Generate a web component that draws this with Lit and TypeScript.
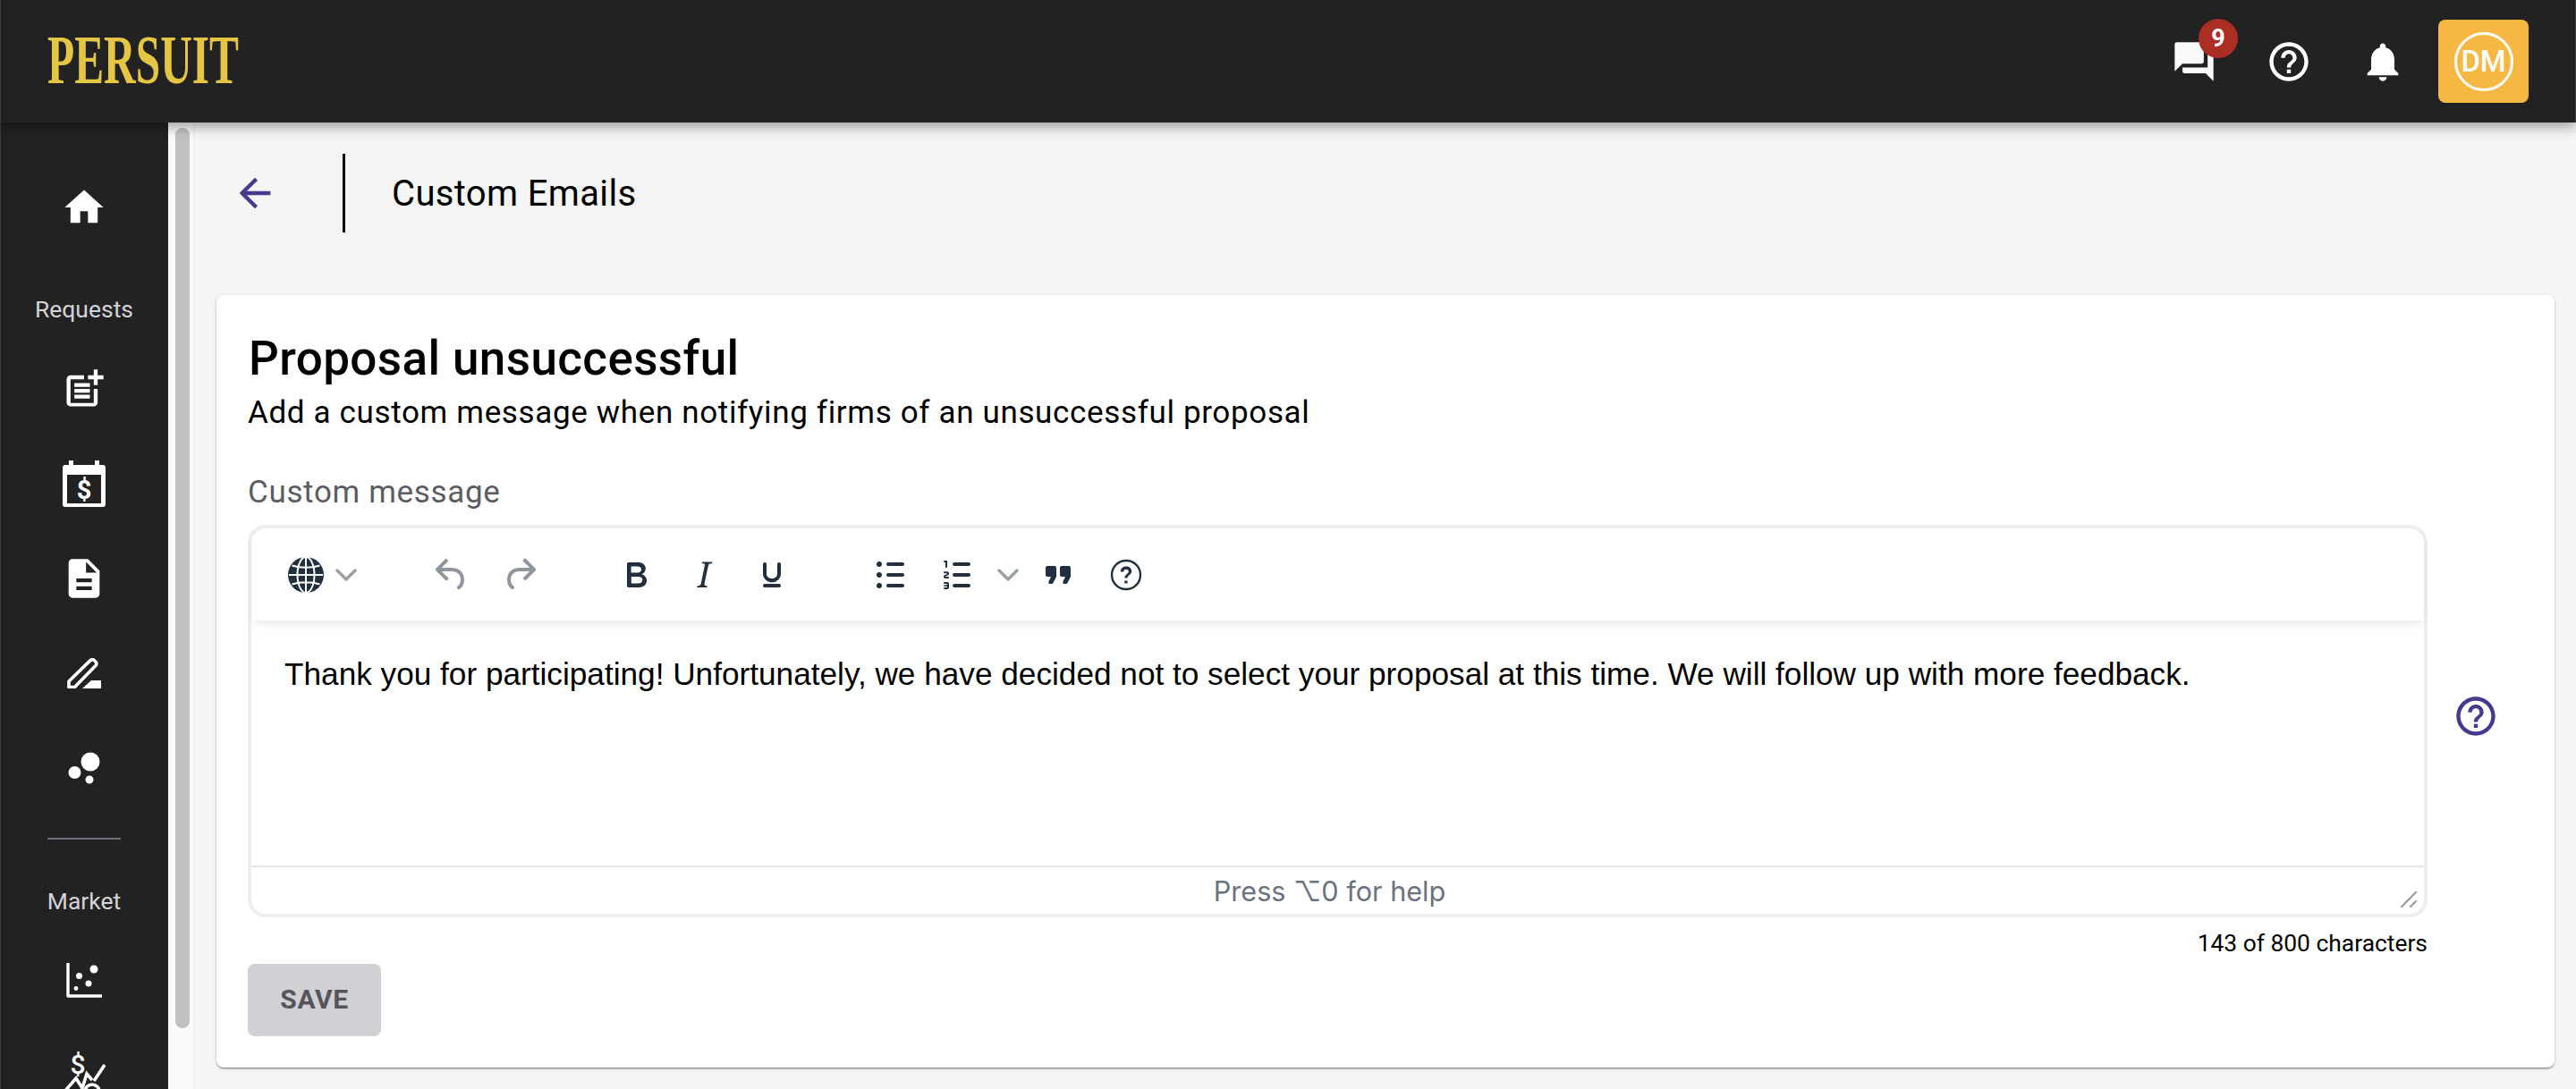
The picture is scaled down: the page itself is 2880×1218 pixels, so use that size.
import { LitElement, html, css } from "lit";
import { customElement } from "lit/decorators.js";

const P = {
  home: "M10 20v-6h4v6h5v-8h3L12 3 2 12h3v8z",
  postAdd: "M17 19.22H5V7h7V5H5C3.9 5 3 5.9 3 7v12c0 1.1.9 2 2 2h12c1.1 0 2-.9 2-2v-7h-2v7.22zM19 2h-2v3h-3s.01 2 0 2h3v2.99c.01.01 2 0 2 0V7h3V5h-3V2zM7 9h8v2H7V9zM7 12v2h8v-2H7zM7 15h8v2H7z",
  desc: "M14 2H6c-1.1 0-1.99.9-1.99 2L4 20c0 1.1.89 2 1.99 2H18c1.1 0 2-.9 2-2V8l-6-6zm2 16H8v-2h8v2zm0-4H8v-2h8v2zm-3-5V3.5L18.5 9H13z",
  forum: "M21 6h-2v9H6v2c0 .55.45 1 1 1h11l4 4V7c0-.55-.45-1-1-1zm-4 6V3c0-.55-.45-1-1-1H3c-.55 0-1 .45-1 1v14l4-4h10c.55 0 1-.45 1-1z",
  help: "M11 18h2v-2h-2v2zm1-16C6.48 2 2 6.48 2 12s4.48 10 10 10 10-4.48 10-10S17.52 2 12 2zm0 18c-4.41 0-8-3.59-8-8s3.59-8 8-8 8 3.59 8 8-3.59 8-8 8zm0-14c-2.21 0-4 1.79-4 4h2c0-1.1.9-2 2-2s2 .9 2 2c0 2-3 1.75-3 5h2c0-2.25 3-2.5 3-5 0-2.21-1.79-4-4-4z",
  bell: "M12 22c1.1 0 2-.9 2-2h-4c0 1.1.89 2 2 2zm6-6v-5c0-3.07-1.64-5.64-4.5-6.32V4c0-.83-.67-1.5-1.5-1.5s-1.5.67-1.5 1.5v.68C7.63 5.36 6 7.92 6 11v5l-2 2v1h16v-1l-2-2z",
  back: "M20 11H7.83l5.59-5.59L12 4l-8 8 8 8 1.41-1.41L7.83 13H20v-2z",
  undo: "M6.4 8H12c3.7 0 6.2 2 6.8 5.1.6 2.7-.4 5.6-2.3 6.8a1 1 0 0 1-1-1.8c1.1-.6 1.8-2.7 1.4-4.6-.5-2.1-2.1-3.5-4.9-3.5H6.4l3.3 3.3a1 1 0 1 1-1.4 1.4l-5-5a1 1 0 0 1 0-1.4l5-5a1 1 0 0 1 1.4 1.4L6.4 8Z",
  redo: "M17.6 10H12c-2.8 0-4.4 1.4-4.9 3.5-.4 2 .3 4 1.4 4.6a1 1 0 1 1-1 1.8c-2-1.2-2.9-4.1-2.3-6.8.6-3 3-5.1 6.8-5.1h5.6l-3.3-3.3a1 1 0 1 1 1.4-1.4l5 5a1 1 0 0 1 0 1.4l-5 5a1 1 0 0 1-1.4-1.4l3.3-3.3Z",
  bold: "M7.8 19c-.3 0-.5 0-.6-.2l-.2-.5V5.7c0-.2 0-.4.2-.5l.6-.2h5c1.5 0 2.7.3 3.5 1 .7.6 1.1 1.4 1.1 2.5a3 3 0 0 1-.6 1.9c-.4.6-1 1-1.6 1.2.4.1.9.3 1.3.6s.8.7 1 1.2c.4.4.5 1 .5 1.6 0 1.3-.4 2.3-1.3 3-.8.7-2.1 1-3.8 1H7.8Zm5-8.3c.6 0 1.2-.1 1.6-.5.4-.3.6-.7.6-1.3 0-1.1-.8-1.7-2.3-1.7H9.3v3.5h3.4Zm.5 6c.7 0 1.3-.1 1.7-.4.4-.4.6-.9.6-1.5s-.2-1-.7-1.4c-.4-.3-1-.4-2-.4H9.4v3.8h4Z",
  italic: "m16.7 4.7-.1.9h-.3c-.6 0-1 0-1.4.3-.3.3-.4.6-.5 1.1l-2.1 9.8v.6c0 .5.4.8 1.4.8h.2l-.2.8H8l.2-.8h.2c1.1 0 1.8-.5 2-1.5l2-9.8.1-.5c0-.6-.4-.8-1.4-.8h-.3l.2-.9h5.8Z",
  underline: "M16 5c.6 0 1 .4 1 1v5.5a4 4 0 0 1-.4 1.8l-1 1.4a5.3 5.3 0 0 1-5.5 1 5 5 0 0 1-1.6-1c-.5-.4-.8-.9-1.1-1.4a4 4 0 0 1-.4-1.8V6c0-.6.4-1 1-1s1 .4 1 1v5.5c0 .3 0 .6.2 1l.6.7a3.3 3.3 0 0 0 2.2.8 3.4 3.4 0 0 0 2.2-.8c.3-.2.4-.5.6-.8l.2-.9V6c0-.6.4-1 1-1ZM8 17h8c.6 0 1 .4 1 1s-.4 1-1 1H8a1 1 0 0 1 0-2Z",
  bullist: "M11 5h8c.6 0 1 .4 1 1s-.4 1-1 1h-8a1 1 0 0 1 0-2Zm0 6h8c.6 0 1 .4 1 1s-.4 1-1 1h-8a1 1 0 0 1 0-2Zm0 6h8c.6 0 1 .4 1 1s-.4 1-1 1h-8a1 1 0 0 1 0-2ZM4.5 6c0-.4.1-.8.4-1 .3-.4.7-.5 1.1-.5.4 0 .8.1 1 .4.4.3.5.7.5 1.1 0 .4-.1.8-.4 1-.3.4-.7.5-1.1.5-.4 0-.8-.1-1-.4-.4-.3-.5-.7-.5-1.1Zm0 6c0-.4.1-.8.4-1 .3-.4.7-.5 1.1-.5.4 0 .8.1 1 .4.4.3.5.7.5 1.1 0 .4-.1.8-.4 1-.3.4-.7.5-1.1.5-.4 0-.8-.1-1-.4-.4-.3-.5-.7-.5-1.1Zm0 6c0-.4.1-.8.4-1 .3-.4.7-.5 1.1-.5.4 0 .8.1 1 .4.4.3.5.7.5 1.1 0 .4-.1.8-.4 1-.3.4-.7.5-1.1.5-.4 0-.8-.1-1-.4-.4-.3-.5-.7-.5-1.1Z",
  numlist: "M10 17h8c.6 0 1 .4 1 1s-.4 1-1 1h-8a1 1 0 0 1 0-2Zm0-6h8c.6 0 1 .4 1 1s-.4 1-1 1h-8a1 1 0 0 1 0-2Zm0-6h8c.6 0 1 .4 1 1s-.4 1-1 1h-8a1 1 0 1 1 0-2ZM6 4v3.5c0 .3-.2.5-.5.5a.5.5 0 0 1-.5-.5V5h-.5a.5.5 0 0 1 0-1H6Zm-1 8.8.2.2h1.3c.3 0 .5.2.5.5s-.2.5-.5.5H4.9a1 1 0 0 1-.9-1V13c0-.4.3-.8.6-1l1.2-.4.2-.3a.2.2 0 0 0-.2-.2H4.5a.5.5 0 0 1-.5-.5c0-.3.2-.5.5-.5h1.6c.5 0 .9.4.9 1v.1c0 .4-.3.8-.6 1l-1.2.4-.2.3ZM7 17v2c0 .6-.4 1-1 1H4.5a.5.5 0 0 1 0-1h1.2c.2 0 .3-.1.3-.3 0-.2-.1-.3-.3-.3H4.4a.4.4 0 1 1 0-.8h1.3c.2 0 .3-.1.3-.3 0-.2-.1-.3-.3-.3H4.5a.5.5 0 1 1 0-1H6c.6 0 1 .4 1 1Z",
  quote: "M7.5 17h.9c.4 0 .7-.2.9-.6L11 13V8c0-.6-.4-1-1-1H6a1 1 0 0 0-1 1v4c0 .6.4 1 1 1h2l-1.3 2.7a1 1 0 0 0 .8 1.3Zm8 0h.9c.4 0 .7-.2.9-.6L19 13V8c0-.6-.4-1-1-1h-4a1 1 0 0 0-1 1v4c0 .6.4 1 1 1h2l-1.3 2.7a1 1 0 0 0 .8 1.3Z",
  qmark: "M12 7.3c-1.8 0-3.1 1.2-3.1 2.9h1.7c0-.8.6-1.3 1.4-1.3s1.4.5 1.4 1.2c0 1.3-2.2 1.5-2.2 3.6h1.6c0-1.5 2.3-1.8 2.3-3.7 0-1.6-1.3-2.7-3.1-2.7Zm-.9 7.9v1.6h1.7v-1.6Z",
};

const m = (d: string, size = 52) =>
  html`<svg class="ic" width=${size} height=${size} viewBox="0 0 24 24"><path d=${d} fill="currentColor"></path></svg>`;

const chevron = html`<svg class="chev" width="24" height="14" viewBox="0 0 24 14"><path d="M2 2l10 10L22 2" fill="none" stroke="#9a9ea5" stroke-width="3.4" stroke-linecap="round" stroke-linejoin="round"></path></svg>`;

const tb = (d: string, dis = false) =>
  html`<span class="tb ${dis ? "dis" : ""}">${m(d, 48)}</span>`;

@customElement("app-root")
export class AppRoot extends LitElement {
  static styles = css`
    :host { display: block; height: 100vh; overflow: hidden; font-family: Roboto, "Noto Sans", sans-serif; background: #f5f5f5; color: #000; }
    * { box-sizing: border-box; }
    .ic { display: block; flex: none; }
    .page { display: flex; flex-direction: column; height: 1218px; overflow: hidden; }
    header { position: relative; z-index: 2; flex: none; height: 137px; background: #222; display: flex; align-items: center; padding: 0 53px; box-shadow: 0 4px 14px rgba(0,0,0,.4), inset 1px 0 #3a3a3a, inset -1px 0 #3a3a3a; }
    .logo { font-family: "Liberation Serif", serif; font-weight: 700; font-size: 79px; line-height: 1; color: #e5c544; transform: scaleX(.625); transform-origin: left center; white-space: nowrap; margin-top: -5px; }
    .right { margin-left: auto; display: flex; align-items: center; color: #fff; }
    .forum { position: relative; margin-right: 54px; color: #fafafa; }
    .badge { position: absolute; left: 31px; top: -22px; width: 44px; height: 44px; border-radius: 50%; background: #ab2e24; color: #fff; font-weight: 700; font-size: 27px; display: flex; align-items: center; justify-content: center; }
    .helpbtn { margin-right: 53px; }
    .bell { margin-right: 36px; }
    .avatar { width: 101px; height: 93px; border-radius: 8px; background: #f5b843; display: flex; align-items: center; justify-content: center; }
    .ring { width: 66px; height: 66px; border: 3.5px solid #fff; border-radius: 50%; display: flex; align-items: center; justify-content: center; color: #fff; font-size: 33px; font-weight: 500; letter-spacing: -.3px; }

    .body { flex: 1; min-height: 0; display: flex; }
    nav { flex: none; width: 188px; background: #222; color: #fff; display: flex; flex-direction: column; align-items: center; padding-top: 42px; overflow: hidden; box-shadow: inset 1px 0 #3a3a3a; }
    .row { flex: none; height: 106px; width: 100%; display: flex; align-items: center; justify-content: center; }
    .label { flex: none; height: 30px; line-height: 30px; font-size: 26.5px; color: #d4d4d8; }
    .l1 { margin-top: 46px; margin-bottom: 21px; }
    .l2 { margin-top: 54px; margin-bottom: 21px; }
    .navdiv { flex: none; width: 82px; height: 2px; margin-top: 25px; background: #6c6c7a; }
    .track { flex: none; width: 30px; background: #fafafa; border-right: 2px solid #f0f0f0; padding: 6px 4px 0 8px; }
    .thumb { height: 1007px; border-radius: 8px; background: #c1c1c1; }

    main { flex: 1; min-width: 0; padding: 35px 24px 0 24px; }
    .crumb { display: flex; align-items: center; height: 88px; color: #46398f; padding-left: 17px; }
    .vr { width: 3px; height: 88px; background: #000; margin-left: 72px; margin-right: 52px; }
    .crumb h1 { margin: 0; font-size: 40px; font-weight: 400; color: #000; letter-spacing: .35px; white-space: nowrap; }
    .card { margin-top: 70px; height: 864px; background: #fff; border-radius: 8px; box-shadow: 0 2px 2px -1px rgba(0,0,0,.35), 0 1px 2px rgba(0,0,0,.2), 0 1px 5px rgba(0,0,0,.1); padding: 42px 40px 0 35px; }
    h2 { margin: 0; font-size: 53px; line-height: 58px; font-weight: 500; letter-spacing: .4px; white-space: nowrap; padding-left: 1px; }
    .sub { font-size: 35px; line-height: 44px; letter-spacing: .65px; white-space: nowrap; margin-top: 10px; }
    .flabel { margin-top: 47px; font-size: 35px; line-height: 40px; color: #5c5c64; letter-spacing: .66px; }
    .edrow { margin-top: 16px; display: flex; align-items: center; }
    .editor { flex: none; width: 2437px; height: 439px; border: 4px solid #eee; border-radius: 20px; display: flex; flex-direction: column; background: #fff; }
    .toolbar { position: relative; flex: none; height: 103px; display: flex; align-items: center; padding-left: 23px; box-shadow: 0 5px 12px -3px rgba(0,0,0,.12); border-radius: 16px 16px 0 0; color: #222f3e; }
    .grp { display: flex; align-items: center; flex: none; }
    .tb { width: 76px; height: 48px; display: flex; justify-content: center; flex: none; }
    .dis { opacity: .5; }
    .g0 { width: 109px; padding-left: 14px; margin-right: 54px; gap: 9px; }
    .g1 { margin-right: 54px; }
    .g2 { margin-right: 56px; }
    .split { width: 36px; display: flex; justify-content: center; }
    .content { flex: 1; padding: 38px 0 0 37px; font-family: "Liberation Sans", Arial, sans-serif; font-size: 35.2px; color: #000; line-height: 44px; white-space: nowrap; }
    .status { position: relative; flex: none; height: 54px; border-top: 2px solid #e5e5e5; display: flex; align-items: center; justify-content: center; padding-right: 18px; font-family: Inter, Roboto, sans-serif; font-size: 30.6px; color: #6a7280; letter-spacing: 0; }
    .grip { position: absolute; right: 7px; bottom: 6px; }
    .side { flex: none; margin-left: 28px; margin-top: -11px; color: #46398f; }
    .count { width: 2437px; text-align: right; margin-top: 13px; font-size: 26.4px; line-height: 32px; color: #000; }
    button { display: block; margin-top: 7px; width: 149px; height: 81px; border: 0; border-radius: 8px; background: #d1d0d5; color: #56555c; font: 700 30px Roboto, sans-serif; letter-spacing: .6px; padding: 0 0 2px; }
  `;

  render() {
    return html`<div class="page">
      <header>
        <div class="logo">PERSUIT</div>
        <div class="right">
          <div class="forum">${m(P.forum)}<span class="badge">9</span></div>
          <div class="helpbtn">${m(P.help)}</div>
          <div class="bell">${m(P.bell)}</div>
          <div class="avatar"><div class="ring">DM</div></div>
        </div>
      </header>
      <div class="body">
        <nav>
          <div class="row">${m(P.home)}</div>
          <div class="label l1">Requests</div>
          <div class="row">${m(P.postAdd)}</div>
          <div class="row">
            <svg width="48" height="52" viewBox="0 0 48 52">
              <path d="M7 0h5v5h24V0h5v5h4a3 3 0 0 1 3 3v41a3 3 0 0 1-3 3H3a3 3 0 0 1-3-3V8a3 3 0 0 1 3-3h4z" fill="#fff"></path>
              <rect x="5" y="16" width="38" height="32" fill="#222"></rect>
              <text x="24" y="43" text-anchor="middle" font-family="Roboto, sans-serif" font-weight="700" font-size="29" fill="#fff">$</text>
            </svg>
          </div>
          <div class="row">${m(P.desc)}</div>
          <div class="row">
            <svg width="38" height="34" viewBox="0 0 38 34">
              <path d="M2 32.5v-6.5L26 2.6c1.4-1.3 3.2-1.3 4.4 0l1.5 1.6c1.2 1.3 1.2 3 0 4.3L8.5 32.5z" fill="none" stroke="#fff" stroke-width="3.6" stroke-linejoin="round"></path>
              <path d="M17 34l10-9h11v9z" fill="#fff"></path>
            </svg>
          </div>
          <div class="row">
            <svg width="36" height="36" viewBox="0 0 36 36">
              <circle cx="25" cy="11" r="10.5" fill="#fff"></circle>
              <circle cx="7.5" cy="23" r="7" fill="#fff"></circle>
              <circle cx="24" cy="31" r="4.5" fill="#fff"></circle>
            </svg>
          </div>
          <div class="navdiv"></div>
          <div class="label l2">Market</div>
          <div class="row">
            <svg width="40" height="40" viewBox="0 0 40 40">
              <path d="M2 1v36h37" fill="none" stroke="#fff" stroke-width="3.4" stroke-linecap="round" stroke-linejoin="round"></path>
              <circle cx="31" cy="7" r="4.5" fill="#fff"></circle>
              <circle cx="14.5" cy="14.5" r="3.5" fill="#fff"></circle>
              <circle cx="25" cy="23" r="3.5" fill="#fff"></circle>
              <circle cx="11" cy="28.5" r="2.4" fill="#fff"></circle>
            </svg>
          </div>
          <div class="row">
            <svg width="52" height="72" viewBox="0 -10 52 72">
              <text x="19" y="24" text-anchor="middle" font-family="Roboto, sans-serif" font-weight="500" font-size="30" fill="#fff">$</text>
              <path d="M4 44l13-15 7 11 5-16 6 7" fill="none" stroke="#fff" stroke-width="3.6"></path>
              <path d="M49 14L37 32" fill="none" stroke="#fff" stroke-width="3.6"></path>
              <circle cx="35" cy="44" r="8" fill="none" stroke="#fff" stroke-width="3.6"></circle>
            </svg>
          </div>
        </nav>
        <div class="track"><div class="thumb"></div></div>
        <main>
          <div class="crumb">
            ${m(P.back)}
            <div class="vr"></div>
            <h1>Custom Emails</h1>
          </div>
          <section class="card">
            <h2>Proposal unsuccessful</h2>
            <div class="sub">Add a custom message when notifying firms of an unsuccessful proposal</div>
            <div class="flabel">Custom message</div>
            <div class="edrow">
              <div class="editor">
                <div class="toolbar">
                  <div class="grp g0">
                    <svg class="ic" width="48" height="48" viewBox="0 0 48 48">
                      <circle cx="24" cy="24" r="20" fill="#222f3e"></circle>
                      <g fill="none" stroke="#fff" stroke-width="2">
                        <ellipse cx="24" cy="24" rx="9.5" ry="20"></ellipse>
                        <path d="M24 4v40M5 24h38M8.5 13.5c9 3 22 3 31 0M8.5 34.5c9-3 22-3 31 0"></path>
                      </g>
                    </svg>
                    ${chevron}
                  </div>
                  <div class="grp g1">${tb(P.undo, true)}${tb(P.redo, true)}</div>
                  <div class="grp g2">${tb(P.bold)}${tb(P.italic)}${tb(P.underline)}</div>
                  <div class="grp">
                    ${tb(P.bullist)}${tb(P.numlist)}
                    <span class="split">${chevron}</span>
                    ${tb(P.quote)}
                    <span class="tb">
                      <svg class="ic" width="48" height="48" viewBox="0 0 24 24">
                        <circle cx="12" cy="12" r="8" fill="none" stroke="currentColor" stroke-width="1.2"></circle>
                        <path d=${P.qmark} fill="currentColor"></path>
                      </svg>
                    </span>
                  </div>
                </div>
                <div class="content">Thank you for participating! Unfortunately, we have decided not to select your proposal at this time. We will follow up with more feedback.</div>
                <div class="status">
                  <span>Press ⌥0 for help</span>
                  <svg class="grip" width="20" height="20" viewBox="0 0 20 20">
                    <path d="M2 18L18 2M12 18l6-6" fill="none" stroke="#9a9ea5" stroke-width="2.4" stroke-linecap="round"></path>
                  </svg>
                </div>
              </div>
              <div class="side">${m(P.help)}</div>
            </div>
            <div class="count">143 of 800 characters</div>
            <button>SAVE</button>
          </section>
        </main>
      </div>
    </div>`;
  }
}
